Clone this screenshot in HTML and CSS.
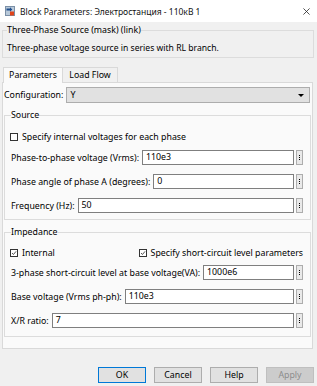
FILE: index.html
```html
<!DOCTYPE html>
<html>
<head>
<meta charset="utf-8">
<link rel="stylesheet" href="styles.css">
</head>
<body>
<div class="titlebar">
  <svg class="appicon" viewBox="0 0 10 10">
    <rect x="0" y="0" width="10" height="10" fill="#b9c9d9"/>
    <rect x="0.5" y="0.5" width="9" height="9" fill="none" stroke="#7a8fa6" stroke-width="1"/>
    <path d="M1.5 2.5 L5 2.5 L5 1.2 L7.3 3.5 L5 5.8 L5 4.5 L1.5 4.5 Z" fill="#1f4e8c"/>
    <rect x="5" y="5.5" width="4" height="4" fill="#e0441b"/>
  </svg>
  <span class="title">Block Parameters: Электростанция - 110кВ 1</span>
  <svg class="close" viewBox="0 0 8 8"><path d="M0.5 0.5 L7.5 7.5 M7.5 0.5 L0.5 7.5" stroke="#222" stroke-width="0.9"/></svg>
</div>
<div class="content">
  <fieldset class="group mask">
    <legend>Three-Phase Source (mask) (link)</legend>
    <p class="desc">Three-phase voltage source in series with RL branch.</p>
  </fieldset>
  <div class="tabs">
    <div class="tab active">Parameters</div>
    <div class="tab">Load Flow</div>
  </div>
  <div class="panel">
    <div class="row config">
      <span class="label">Configuration:</span>
      <div class="select"><span>Y</span><span class="caret"></span></div>
    </div>
    <fieldset class="group inner">
      <legend>Source</legend>
      <div class="checks">
        <div class="check"><span class="box"></span><span>Specify internal voltages for each phase</span></div>
      </div>
      <div class="row"><span class="label">Phase-to-phase voltage (Vrms):</span><div class="input">110e3</div><span class="dots"><i></i><i></i><i></i></span></div>
      <div class="row"><span class="label">Phase angle of phase A (degrees):</span><div class="input">0</div><span class="dots"><i></i><i></i><i></i></span></div>
      <div class="row"><span class="label">Frequency (Hz):</span><div class="input">50</div><span class="dots"><i></i><i></i><i></i></span></div>
    </fieldset>
    <fieldset class="group inner imp">
      <legend>Impedance</legend>
      <div class="checks split">
        <div class="check"><span class="box"><svg viewBox="0 0 7 7"><path d="M1.2 3.6 L2.9 5.2 L5.9 1.6" fill="none" stroke="#222" stroke-width="0.9"/></svg></span><span>Internal</span></div>
        <div class="check"><span class="box"><svg viewBox="0 0 7 7"><path d="M1.2 3.6 L2.9 5.2 L5.9 1.6" fill="none" stroke="#222" stroke-width="0.9"/></svg></span><span>Specify short-circuit level parameters</span></div>
      </div>
      <div class="row"><span class="label">3-phase short-circuit level at base voltage(VA):</span><div class="input">1000e6</div><span class="dots"><i></i><i></i><i></i></span></div>
      <div class="row"><span class="label">Base voltage (Vrms ph-ph):</span><div class="input">110e3</div><span class="dots"><i></i><i></i><i></i></span></div>
      <div class="row"><span class="label">X/R ratio:</span><div class="input">7</div><span class="dots"><i></i><i></i><i></i></span></div>
    </fieldset>
  </div>
  <div class="buttons">
    <div class="btn default">OK</div>
    <div class="btn">Cancel</div>
    <div class="btn">Help</div>
    <div class="btn disabled">Apply</div>
  </div>
</div>
</body>
</html>
```
FILE: styles.css
```css
* { box-sizing: border-box; }
html, body { margin: 0; padding: 0; }
body {
  width: 317px;
  height: 386px;
  overflow: hidden;
  background: #f0f0f0;
  font-family: "Noto Sans", "Liberation Sans", sans-serif;
  font-size: 8.8px;
  color: #000;
}
.titlebar {
  height: 22px;
  background: #fff;
  display: flex;
  align-items: center;
  padding: 0 6px 0 5px;
}
.appicon { width: 10px; height: 10px; margin-right: 5px; flex: none; }
.title { flex: 1; white-space: nowrap; color: #111; font-size: 8.5px; }
.close { width: 7px; height: 7px; flex: none; margin-right: 1px; }

.content { padding: 2px 3px 0 2px; }

.group {
  margin: 0;
  border: 1px solid #dcdcdc;
  min-width: 0;
}
.group legend {
  padding: 0;
  height: 12px;
  line-height: 12px;
  color: #000;
}
.group.mask { padding: 6px 4px 3px 4px; }
.desc { margin: 0; height: 12px; line-height: 12px; font-size: 8.6px; }

.tabs { display: flex; margin: 9px 0 0 1px; position: relative; z-index: 1; }
.tab {
  height: 15px;
  line-height: 14px;
  text-align: center;
  border: 1px solid #d9d9d9;
  border-bottom: none;
  background: #f0f0f0;
}
.tab.active { width: 60px; background: #fafafa; height: 16px; margin-bottom: -1px; }
.tab:not(.active) { width: 55px; border-left: none; }

.panel {
  border: 1px solid #d9d9d9;
  background: #fafafa;
  margin-right: 1px;
  padding: 4px 1px 10px 0;
  height: 267px;
}
.row { display: flex; align-items: center; height: 15px; }
.label { white-space: nowrap; margin-right: 3px; }
.config { height: 16px; padding-left: 1px; }
.select {
  flex: 1;
  height: 16px;
  margin-right: 1px;
  background: #e1e1e1;
  border: 1px solid #adadad;
  display: flex;
  align-items: center;
  justify-content: space-between;
  padding: 0 5px 0 3px;
}
.caret {
  width: 0; height: 0;
  border-left: 3px solid transparent;
  border-right: 3px solid transparent;
  border-top: 3px solid #000;
}

.group.inner { margin: 6px 0 0 1px; padding: 8px 7px 6px 6px; }
.group.imp { padding: 7px 7px 8px 6px; }
.inner .row + .row { margin-top: 9px; }
.checks { display: flex; height: 16px; align-items: center; margin-bottom: 5px; margin-left: -1px; }
.imp .checks { margin-bottom: 4px; }
.checks.split { justify-content: space-between; }
.check { display: flex; align-items: center; white-space: nowrap; }
.box {
  width: 8px; height: 8px;
  border: 1px solid #333;
  background: #fff;
  margin-right: 4px;
  display: flex;
}
.box svg { width: 6px; height: 6px; }
.input {
  flex: 1;
  height: 15px;
  line-height: 13px;
  background: #fff;
  border: 1px solid #7f7f7f;
  padding-left: 3px;
  white-space: nowrap;
}
.dots {
  width: 7px; height: 15px;
  margin-left: 2px;
  border: 1px solid #adadad;
  background: #e9e9e9;
  display: flex;
  flex-direction: column;
  align-items: center;
  justify-content: center;
  gap: 1px;
}
.dots i { display: block; width: 1px; height: 1px; background: #000; }

.buttons {
  display: flex;
  justify-content: flex-end;
  gap: 8px;
  margin-top: 18px;
}
.btn {
  width: 48px;
  height: 16px;
  line-height: 14px;
  text-align: center;
  background: #e1e1e1;
  border: 1px solid #adadad;
}
.btn.default { border-color: #0078d7; }
.btn.disabled { background: #cccccc; border-color: #bfbfbf; color: #8d8d8d; }
```
